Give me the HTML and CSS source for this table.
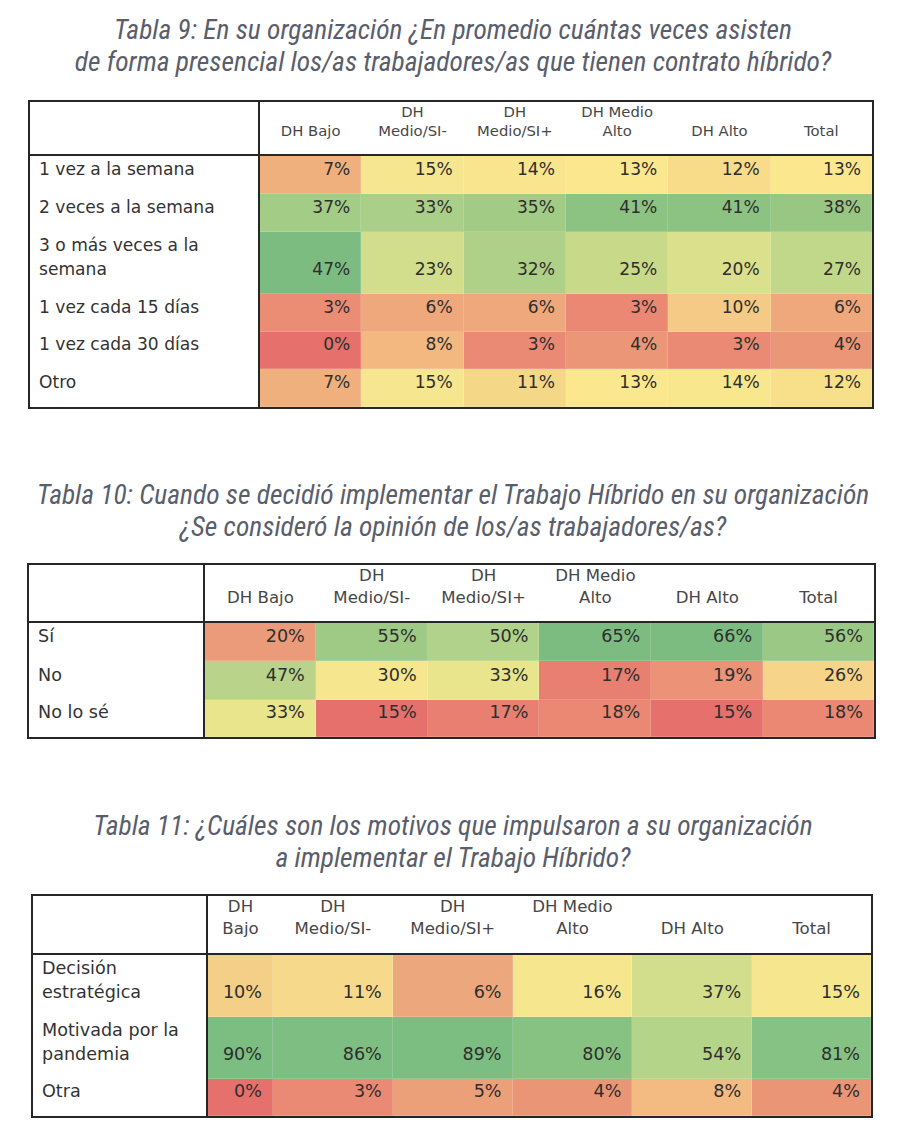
FILE: index.html
```html
<!DOCTYPE html>
<html lang="es">
<head>
<meta charset="utf-8">
<title>Tablas</title>
<link rel="stylesheet" href="styles.css">
</head>
<body>
<section class="block block-9">
  <h2 class="title">Tabla 9: En su organización ¿En promedio cuántas veces asisten<br>de forma presencial los/as trabajadores/as que tienen contrato híbrido?</h2>
  <table class="grid t9">
    <colgroup><col class="c-label"><col><col><col><col><col><col></colgroup>
    <thead>
      <tr class="hrow">
        <th class="blank"></th><th>DH Bajo</th><th>DH<br>Medio/SI-</th><th>DH<br>Medio/SI+</th><th>DH Medio<br>Alto</th><th>DH Alto</th><th>Total</th>
      </tr>
    </thead>
    <tbody>
      <tr class="r39"><td class="lbl">1 vez a la semana</td><td style="background:#f0b07e">7%</td><td style="background:#f6e690">15%</td><td style="background:#f8e58d">14%</td><td style="background:#fbe88e">13%</td><td style="background:#f8dc8a">12%</td><td style="background:#fbe88e">13%</td></tr>
      <tr class="r38"><td class="lbl">2 veces a la semana</td><td style="background:#a3cc86">37%</td><td style="background:#a9cf88">33%</td><td style="background:#a2cb86">35%</td><td style="background:#8cc383">41%</td><td style="background:#8cc383">41%</td><td style="background:#98c784">38%</td></tr>
      <tr class="r62"><td class="lbl">3 o más veces a la<br>semana</td><td style="background:#7cbc81">47%</td><td style="background:#d3de8c">23%</td><td style="background:#aed088">32%</td><td style="background:#c8da8a">25%</td><td style="background:#dbe08c">20%</td><td style="background:#c1d88a">27%</td></tr>
      <tr class="r38"><td class="lbl">1 vez cada 15 días</td><td style="background:#eb8c74">3%</td><td style="background:#eea87c">6%</td><td style="background:#eea87c">6%</td><td style="background:#eb8874">3%</td><td style="background:#f5ca86">10%</td><td style="background:#eea87c">6%</td></tr>
      <tr class="r37"><td class="lbl">1 vez cada 30 días</td><td style="background:#e6706b">0%</td><td style="background:#f2b880">8%</td><td style="background:#eb8a74">3%</td><td style="background:#eb9677">4%</td><td style="background:#eb8a74">3%</td><td style="background:#eb9677">4%</td></tr>
      <tr class="r39"><td class="lbl">Otro</td><td style="background:#f0b07e">7%</td><td style="background:#f6e690">15%</td><td style="background:#f4d888">11%</td><td style="background:#fbe88e">13%</td><td style="background:#f9e78e">14%</td><td style="background:#f8df8a">12%</td></tr>
    </tbody>
  </table>
</section>

<section class="block block-10">
  <h2 class="title">Tabla 10: Cuando se decidió implementar el Trabajo Híbrido en su organización<br>¿Se consideró la opinión de los/as trabajadores/as?</h2>
  <table class="grid t10">
    <colgroup><col class="c-label"><col><col><col><col><col><col></colgroup>
    <thead>
      <tr class="hrow">
        <th class="blank"></th><th>DH Bajo</th><th>DH<br>Medio/SI-</th><th>DH<br>Medio/SI+</th><th>DH Medio<br>Alto</th><th>DH Alto</th><th>Total</th>
      </tr>
    </thead>
    <tbody>
      <tr class="r39"><td class="lbl">Sí</td><td style="background:#eb9b79">20%</td><td style="background:#9fca86">55%</td><td style="background:#b1d28a">50%</td><td style="background:#7cbc81">65%</td><td style="background:#7cbc81">66%</td><td style="background:#9bc985">56%</td></tr>
      <tr class="r39"><td class="lbl">No</td><td style="background:#b9d38a">47%</td><td style="background:#f6e78e">30%</td><td style="background:#e8e58c">33%</td><td style="background:#e87f71">17%</td><td style="background:#eb9277">19%</td><td style="background:#f6d48a">26%</td></tr>
      <tr class="r38"><td class="lbl">No lo sé</td><td style="background:#e8e58c">33%</td><td style="background:#e6706b">15%</td><td style="background:#e87f71">17%</td><td style="background:#ea8873">18%</td><td style="background:#e6706b">15%</td><td style="background:#ea8873">18%</td></tr>
    </tbody>
  </table>
</section>

<section class="block block-11">
  <h2 class="title">Tabla 11: ¿Cuáles son los motivos que impulsaron a su organización<br>a implementar el Trabajo Híbrido?</h2>
  <table class="grid t11">
    <colgroup><col class="c-label"><col class="c-narrow"><col><col><col><col><col></colgroup>
    <thead>
      <tr class="hrow">
        <th class="blank"></th><th>DH<br>Bajo</th><th>DH<br>Medio/SI-</th><th>DH<br>Medio/SI+</th><th>DH Medio<br>Alto</th><th>DH Alto</th><th>Total</th>
      </tr>
    </thead>
    <tbody>
      <tr class="r63"><td class="lbl">Decisión<br>estratégica</td><td style="background:#f4cf88">10%</td><td style="background:#f6d98a">11%</td><td style="background:#eca87c">6%</td><td style="background:#f6e78e">16%</td><td style="background:#d3de8d">37%</td><td style="background:#f6e78e">15%</td></tr>
      <tr class="r62"><td class="lbl">Motivada por la<br>pandemia</td><td style="background:#7cbd82">90%</td><td style="background:#7fbe82">86%</td><td style="background:#7cbd82">89%</td><td style="background:#88c283">80%</td><td style="background:#b4d48a">54%</td><td style="background:#86c283">81%</td></tr>
      <tr class="r37"><td class="lbl">Otra</td><td style="background:#e6706b">0%</td><td style="background:#ea8a74">3%</td><td style="background:#eca07a">5%</td><td style="background:#eb9577">4%</td><td style="background:#f3bb82">8%</td><td style="background:#eb9577">4%</td></tr>
    </tbody>
  </table>
</section>
</body>
</html>
```
FILE: styles.css
```css
html, body {
  margin: 0;
  padding: 0;
  background: #ffffff;
}
body {
  width: 906px;
  font-family: "DejaVu Sans", "Liberation Sans", sans-serif;
  color: #2b2b2b;
}
.block {
  display: flex;
  flex-direction: column;
}
.block-9 { padding-top: 14px; }
.block-10 { padding-top: 70px; }
.block-11 { padding-top: 71px; }

.title {
  margin: 0 0 22px 0;
  text-align: center;
  font-family: "Liberation Sans Narrow", "Roboto Condensed", "Liberation Sans", sans-serif;
  font-style: italic;
  font-weight: normal;
  font-size: 27.5px;
  line-height: 32px;
  color: #5a5e6b;
}
.block-10 .title { margin-bottom: 20px; }
.block-11 .title { margin-bottom: 20px; }

.grid {
  border-collapse: collapse;
  table-layout: fixed;
  border: 2px solid #262626;
}
.grid th {
  font-weight: normal;
  color: #474747;
  text-align: center;
  vertical-align: bottom;
  padding: 0 2px;
  border-bottom: 2px solid #262626;
}
.grid th.blank,
.grid td.lbl {
  border-right: 2px solid #262626;
}
.grid td {
  vertical-align: bottom;
  text-align: right;
  padding: 0 11px 13px 0;
  line-height: 24px;
  color: #2e2e2e;
  box-shadow: inset -1px -1px 0 rgba(255, 255, 255, 0.16);
}
.grid td.lbl {
  text-align: left;
  padding-left: 9px;
  background: #ffffff;
  color: #333333;
  box-shadow: none;
}
.r37 { height: 37px; }
.r38 { height: 38px; }
.r39 { height: 39px; }
.r62 { height: 62px; }
.r63 { height: 63px; }

/* Tabla 9 */
.t9 {
  width: 846px;
  margin-left: 28px;
  font-size: 17.1px;
}
.t9 .c-label { width: 230px; }
.t9 .hrow { height: 53px; }
.t9 th {
  font-size: 14.8px;
  line-height: 19px;
  padding-bottom: 14px;
}

/* Tabla 10 */
.t10 {
  width: 849px;
  margin-left: 27px;
  font-size: 17.6px;
}
.t10 .c-label { width: 176px; }
.t10 .hrow { height: 56px; }
.t10 th {
  font-size: 16.6px;
  line-height: 22px;
  padding-bottom: 12px;
}

/* Tabla 11 */
.t11 {
  width: 842px;
  margin-left: 31px;
  font-size: 17.6px;
}
.t11 .c-label { width: 175px; }
.t11 .c-narrow { width: 66px; }
.t11 .hrow { height: 57px; }
.t11 th {
  font-size: 16.6px;
  line-height: 22px;
  padding-bottom: 13px;
}
```
